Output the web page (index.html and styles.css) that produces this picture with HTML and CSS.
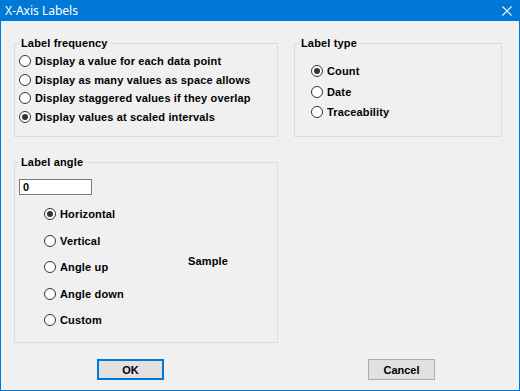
FILE: index.html
```html
<!DOCTYPE html>
<html lang="en">
  <head>
    <meta charset="UTF-8" />
    <title>X-Axis Labels</title>
    <link rel="stylesheet" href="styles.css">
  </head>
  <body>
    <div class="window">
      <div class="titlebar">
        <span class="title">X-Axis Labels</span>
        <svg class="close" width="10" height="10" viewBox="0 0 10 10">
          <path d="M0.5 0.5 L9.5 9.5 M9.5 0.5 L0.5 9.5" stroke="#fff" stroke-width="1.1" fill="none" />
        </svg>
      </div>

      <div class="content">
        <fieldset class="group group-frequency">
          <legend>Label frequency</legend>
          <label class="option"><span class="radio"></span>Display a value for each data point</label>
          <label class="option"><span class="radio"></span>Display as many values as space allows</label>
          <label class="option"><span class="radio"></span>Display staggered values if they overlap</label>
          <label class="option"><span class="radio checked"></span>Display values at scaled intervals</label>
        </fieldset>

        <fieldset class="group group-type">
          <legend>Label type</legend>
          <label class="option"><span class="radio checked"></span>Count</label>
          <label class="option"><span class="radio"></span>Date</label>
          <label class="option"><span class="radio"></span>Traceability</label>
        </fieldset>

        <fieldset class="group group-angle">
          <legend>Label angle</legend>
          <div class="angle-input">0</div>
          <div class="angle-body">
            <div class="angle-options">
              <label class="option"><span class="radio checked"></span>Horizontal</label>
              <label class="option"><span class="radio"></span>Vertical</label>
              <label class="option"><span class="radio"></span>Angle up</label>
              <label class="option"><span class="radio"></span>Angle down</label>
              <label class="option"><span class="radio"></span>Custom</label>
            </div>
            <div class="sample">Sample</div>
          </div>
        </fieldset>
      </div>

      <div class="buttons">
        <button class="btn btn-default">OK</button>
        <button class="btn">Cancel</button>
      </div>
    </div>
  </body>
</html>
```

FILE: styles.css
```css
* {
  box-sizing: border-box;
  margin: 0;
  padding: 0;
}

body {
  background: #f0f0f0;
  font-family: "Liberation Sans", Arial, sans-serif;
  font-size: 11px;
  font-weight: bold;
  letter-spacing: 0.15px;
  color: #000;
}

.window {
  width: 520px;
  height: 391px;
  border: 1px solid #0078d7;
  border-top: none;
  background: #f0f0f0;
  display: flex;
  flex-direction: column;
}

.titlebar {
  height: 21px;
  margin: 0 -1px;
  background: #0078d7;
  color: #fff;
  display: flex;
  align-items: center;
  justify-content: space-between;
  padding: 0 8px 0 5px;
}

.title {
  font-family: "Noto Sans", "Open Sans", sans-serif;
  font-weight: normal;
  font-size: 12px;
  letter-spacing: 0;
}

.close {
  display: block;
  margin-top: 1px;
}

.content {
  display: grid;
  grid-template-columns: 264px 208px;
  column-gap: 16px;
  row-gap: 19px;
  align-items: start;
  padding: 16px 17px 0 13px;
}

.group {
  border: 1px solid #dcdcdc;
  min-width: 0;
}

.group legend {
  margin-left: 4px;
  padding: 0 2px;
  line-height: 12px;
}

.option {
  display: flex;
  align-items: center;
  white-space: nowrap;
}

.radio {
  position: relative;
  width: 12px;
  height: 12px;
  border: 1px solid #333;
  border-radius: 50%;
  background: #fff;
  margin-right: 4px;
  flex: none;
}

.radio.checked::after {
  content: "";
  position: absolute;
  left: 2px;
  top: 2px;
  width: 6px;
  height: 6px;
  border-radius: 50%;
  background: #333;
}

.group-frequency {
  height: 100px;
  padding-top: 3px;
}

.group-frequency .option {
  height: 18.5px;
  margin-left: 4px;
}

.group-type {
  height: 100px;
  padding-top: 12px;
}

.group-type .option {
  height: 20.5px;
  margin-left: 16px;
}

.group-angle {
  height: 187px;
  padding-top: 11px;
}

.angle-input {
  width: 73px;
  height: 16px;
  margin-left: 4px;
  border: 1px solid #7a7a7a;
  background: #fff;
  padding-left: 3px;
  line-height: 14px;
}

.angle-body {
  display: flex;
  margin-top: 6px;
}

.angle-options {
  padding-left: 29px;
  width: 173px;
}

.angle-options .option {
  height: 26.5px;
}

.sample {
  display: flex;
  align-items: center;
  padding-bottom: 12px;
}

.buttons {
  display: flex;
  justify-content: space-between;
  padding: 16px 84px 0 96px;
}

.btn {
  width: 67px;
  height: 21px;
  background: #e1e1e1;
  border: 1px solid #adadad;
  font: inherit;
  color: #000;
}

.btn-default {
  border: 2px solid #0078d7;
}
```
